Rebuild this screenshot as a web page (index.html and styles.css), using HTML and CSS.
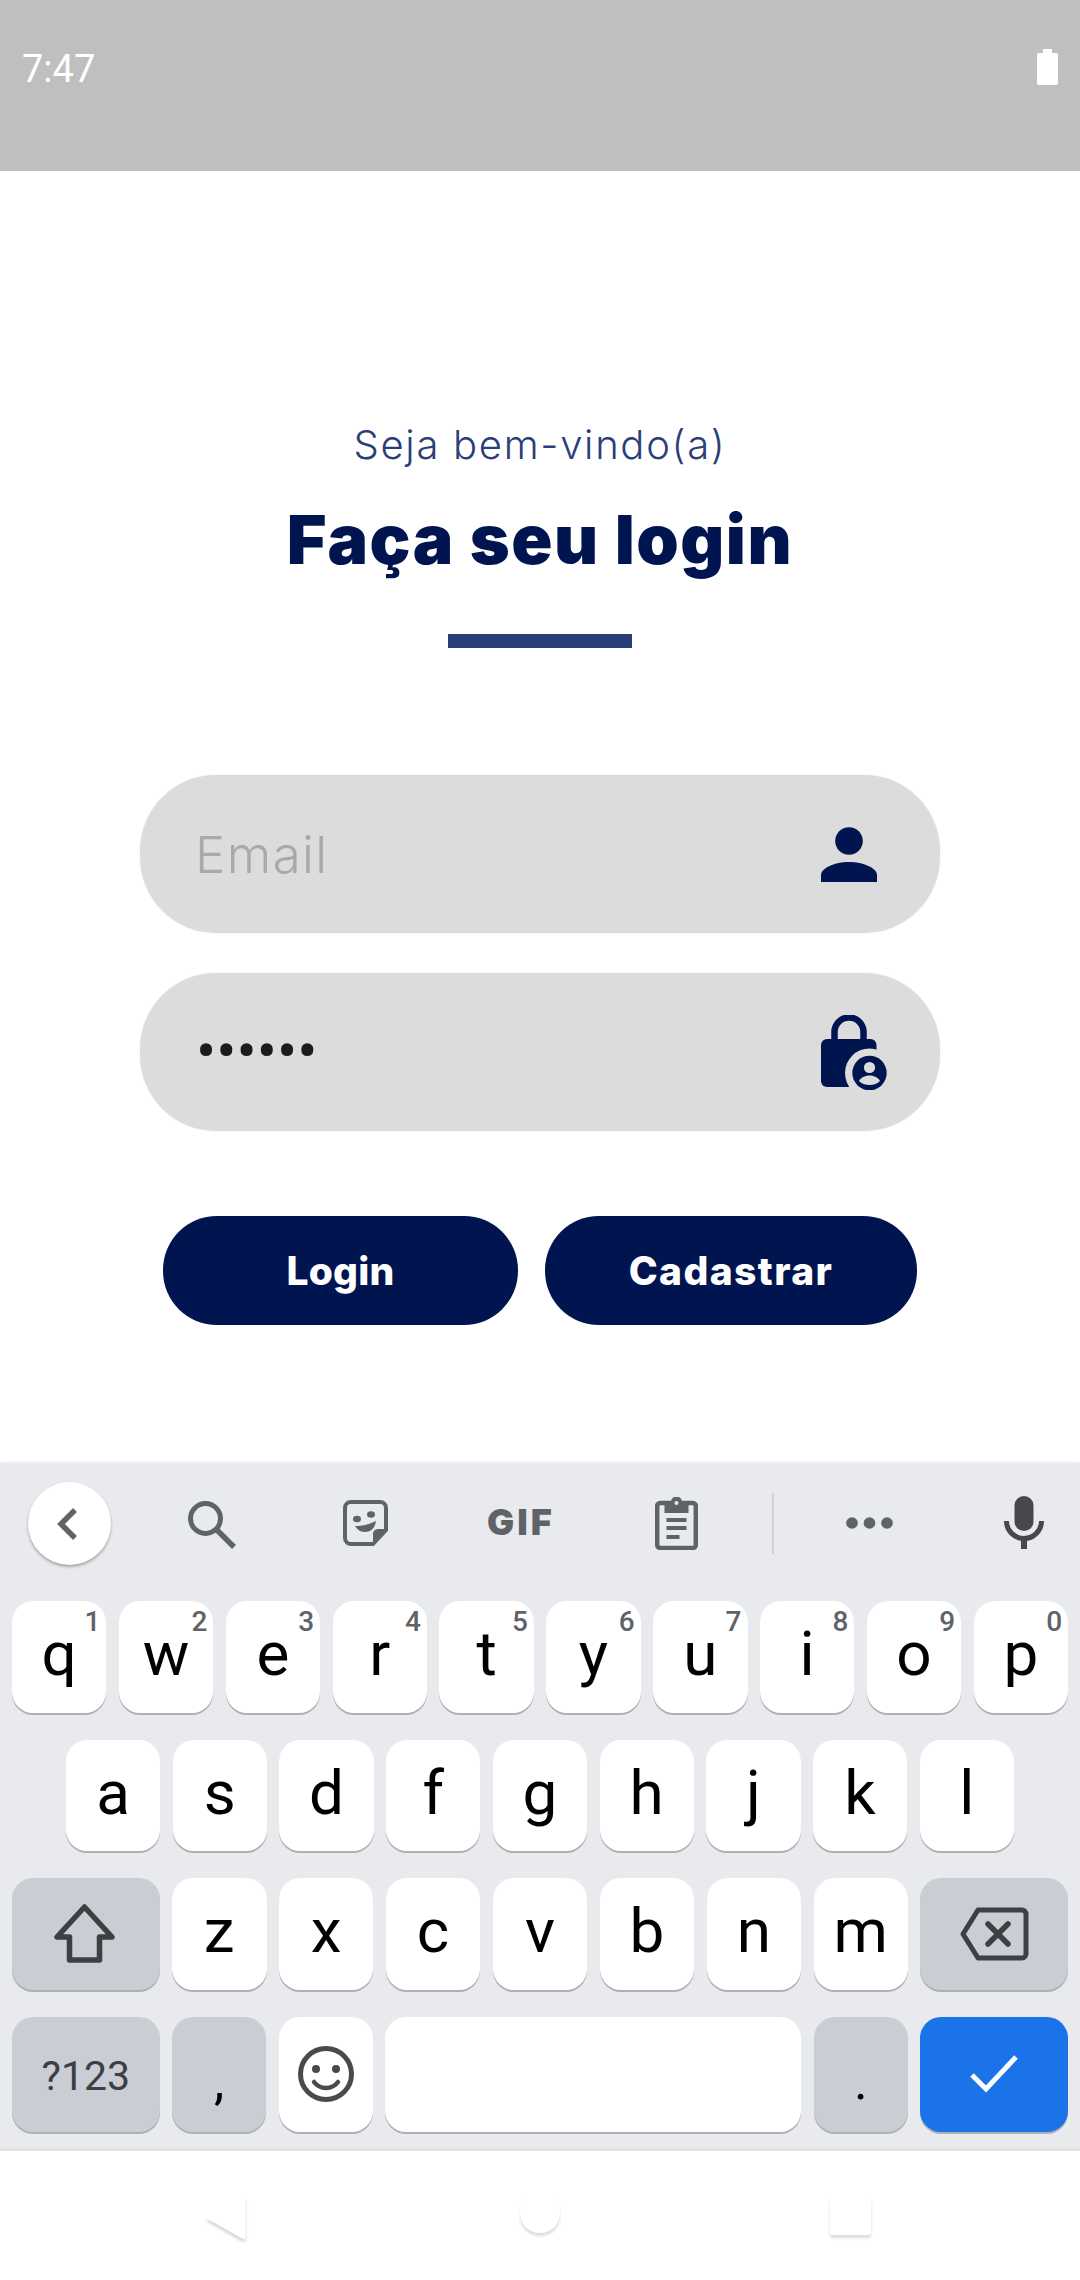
FILE: index.html
```html
<!DOCTYPE html>
<html>
<head>
<meta http-equiv="Content-Type" content="text/html; charset=utf-8"/>
<title>Login</title>
<link rel="stylesheet" href="styles.css">
</head>
<body>

<div class="statusbar">
  <span class="time">7:47</span>
  <svg class="battery" width="21" height="36" viewBox="0 0 21 36"><path d="M6 0h9v4h4a2 2 0 0 1 2 2v28a2 2 0 0 1-2 2H2a2 2 0 0 1-2-2V6a2 2 0 0 1 2-2h4z" fill="#fff"/></svg>
</div>

<div class="main">
  <p class="welcome">Seja bem-vindo(a)</p>
  <h1 class="title">Faça seu login</h1>
  <div class="rule"></div>

  <div class="field">
    <span class="placeholder">Email</span>
    <svg width="56" height="55" viewBox="0 0 56 55"><circle cx="28" cy="14" r="13.8" fill="#00154f"/><path d="M0 55v-7C0 41 14 35 28 35s28 6 28 13v7z" fill="#00154f"/></svg>
  </div>
  <div class="field field-pass">
    <span class="dots">••••••</span>
    <svg width="66" height="75" viewBox="0 0 66 75">
      <path d="M13.5 26V17a14.5 14.5 0 0 1 29 0v9" fill="none" stroke="#00154f" stroke-width="6.5"/>
      <rect x="0" y="24" width="55.5" height="48" rx="6" fill="#00154f"/>
      <circle cx="48.5" cy="58" r="24.5" fill="#dcdcdc"/>
      <circle cx="48.5" cy="58" r="17.2" fill="#00154f"/>
      <circle cx="48.5" cy="52.5" r="5.6" fill="#dcdcdc"/>
      <path d="M38 66c2-4 7-5.500 10.500-5.500S57 62 59 66c-2.500 2.500-6 4-10.500 4S40.500 68.500 38 66z" fill="#dcdcdc"/>
    </svg>
  </div>

  <div class="actions">
    <button class="btn btn-login">Login</button>
    <button class="btn btn-signup">Cadastrar</button>
  </div>
</div>

<div class="keyboard">
  <div class="toolbar">
    <div class="back">
      <svg width="20" height="32" viewBox="0 0 20 32"><path d="M18 2 4 16l14 14" fill="none" stroke="#5f6368" stroke-width="5.500"/></svg>
    </div>
    <svg class="t-search" width="48" height="48" viewBox="0 0 48 48"><circle cx="17.500" cy="17.500" r="15" fill="none" stroke="#5f6368" stroke-width="5"/><path d="M28 28l18 18" stroke="#5f6368" stroke-width="5.500"/></svg>
    <svg class="t-sticker" width="47" height="46" viewBox="0 0 47 46">
      <path d="M8 2h29a6 6 0 0 1 6 6v22L30 44H8a6 6 0 0 1-6-6V8a6 6 0 0 1 6-6z" fill="none" stroke="#5f6368" stroke-width="4"/>
      <path d="M44 29 30 44V35a5 5 0 0 1 5-6z" fill="#5f6368"/>
      <ellipse cx="14" cy="19" rx="4" ry="3.200" fill="#5f6368"/>
      <ellipse cx="28" cy="14.500" rx="4" ry="3.200" fill="#5f6368"/>
      <path d="M12 26c7 0 13-1 21-5-1 7-5 11-11 11-5 0-8-3-10-6z" fill="#5f6368"/>
    </svg>
    <span class="gif">GIF</span>
    <svg class="t-clip" width="43" height="53" viewBox="0 0 43 53">
      <rect x="2.200" y="6" width="38.600" height="45" rx="3" fill="none" stroke="#5f6368" stroke-width="4.500"/>
      <path d="M9.500 5h6.500a5.500 5.500 0 0 1 11 0h6.500v11h-24z" fill="#5f6368"/>
      <circle cx="21.500" cy="6" r="2" fill="#e8eaed"/>
      <path d="M11.500 23h20M11.500 31h20M11.500 40h13" stroke="#5f6368" stroke-width="4"/>
    </svg>
    <div class="divider"></div>
    <svg class="t-more" width="47" height="12" viewBox="0 0 47 12"><circle cx="6" cy="6" r="5.800" fill="#5f6368"/><circle cx="23.500" cy="6" r="5.800" fill="#5f6368"/><circle cx="41" cy="6" r="5.800" fill="#5f6368"/></svg>
    <svg class="t-mic" width="40" height="53" viewBox="0 0 40 53">
      <rect x="10.500" y="0" width="19" height="35" rx="9.500" fill="#46484b"/>
      <path d="M2.500 25a17.500 17.500 0 0 0 35 0" fill="none" stroke="#46484b" stroke-width="5"/>
      <rect x="17" y="41" width="6" height="12" fill="#46484b"/>
    </svg>
  </div>

  <div class="rows">
    <div class="row">
      <div class="key">q<span class="hint">1</span></div>
      <div class="key">w<span class="hint">2</span></div>
      <div class="key">e<span class="hint">3</span></div>
      <div class="key">r<span class="hint">4</span></div>
      <div class="key">t<span class="hint">5</span></div>
      <div class="key">y<span class="hint">6</span></div>
      <div class="key">u<span class="hint">7</span></div>
      <div class="key">i<span class="hint">8</span></div>
      <div class="key">o<span class="hint">9</span></div>
      <div class="key">p<span class="hint">0</span></div>
    </div>
    <div class="row row-home">
      <div class="key">a</div>
      <div class="key">s</div>
      <div class="key">d</div>
      <div class="key">f</div>
      <div class="key">g</div>
      <div class="key">h</div>
      <div class="key">j</div>
      <div class="key">k</div>
      <div class="key">l</div>
    </div>
    <div class="row">
      <div class="key key-wide key-fn">
        <svg class="shift" width="61" height="59" viewBox="0 0 61 59"><path d="M30.500 3 3 33h12.500v23h30V33H58z" fill="none" stroke="#3c4043" stroke-width="5.500" stroke-linejoin="round"/></svg>
      </div>
      <div class="key">z</div>
      <div class="key">x</div>
      <div class="key">c</div>
      <div class="key">v</div>
      <div class="key">b</div>
      <div class="key">n</div>
      <div class="key">m</div>
      <div class="key key-wide key-fn">
        <svg width="69" height="54" viewBox="0 0 69 54"><path d="M18 3h44a4 4 0 0 1 4 4v40a4 4 0 0 1-4 4H18L3 27z" fill="none" stroke="#3c4043" stroke-width="5" stroke-linejoin="round"/><path d="M28 17l20 20M48 17 28 37" stroke="#3c4043" stroke-width="5.500" stroke-linecap="round"/></svg>
      </div>
    </div>
    <div class="row">
      <div class="key key-wide key-fn key-sym">?123</div>
      <div class="key key-fn key-punct">,</div>
      <div class="key">
        <svg width="56" height="56" viewBox="0 0 56 56"><circle cx="28" cy="28" r="25.500" fill="none" stroke="#4a4a4a" stroke-width="5"/><circle cx="18" cy="23" r="4" fill="#4a4a4a"/><circle cx="38" cy="23" r="4" fill="#4a4a4a"/><path d="M16 36c3 4 7.500 6 12 6s9-2 12-6" fill="none" stroke="#4a4a4a" stroke-width="4.500" stroke-linecap="round"/></svg>
      </div>
      <div class="key key-space"></div>
      <div class="key key-fn key-punct">.</div>
      <div class="key key-wide key-go">
        <svg width="48" height="38" viewBox="0 0 48 38"><path d="M2 20l14 14L46 2" fill="none" stroke="#fff" stroke-width="5"/></svg>
      </div>
    </div>
  </div>
</div>

<div class="navbar">
  <svg class="nav-back" width="50" height="52" viewBox="0 0 50 52"><path d="M43 2a1.500 1.500 0 0 1 1.500 1.500V42a2 2 0 0 1-3 1.800L5 23z" fill="#fff"/></svg>
  <div class="nav-home"></div>
  <div class="nav-recent"></div>
</div>

</body>
</html>
```

FILE: styles.css
```css
body {
  margin: 0;
  width: 1080px;
  height: 2280px;
  overflow: hidden;
  display: flex;
  flex-direction: column;
  background-color: white;
  font-family: "Inter", "Noto Sans", sans-serif;
}

/* status bar */

.statusbar {
  height: 171px;
  flex: none;
  box-sizing: border-box;
  padding: 46px 22px 0;
  display: flex;
  justify-content: space-between;
  align-items: flex-start;
  background-color: #bfbfbf;
}

.time {
  font-family: "Roboto", sans-serif;
  font-size: 38px;
  line-height: 46px;
  color: #fff;
}

.battery {
  margin-top: 3px;
}

/* login form */

.main {
  flex: none;
  height: 1292px;
  display: flex;
  flex-direction: column;
  align-items: center;
}

.welcome {
  margin: 249px 0 0;
  font-size: 40px;
  font-weight: 300;
  line-height: 50px;
  letter-spacing: 1.7px;
  color: #2a3f78;
}

.title {
  margin: 26px 0 0;
  font-size: 68px;
  font-weight: 900;
  line-height: 86px;
  letter-spacing: 1.5px;
  color: #00154f;
}

.rule {
  width: 184px;
  height: 14px;
  margin-top: 52px;
  background-color: #2a3f78;
}

.field {
  width: 800px;
  height: 158px;
  box-sizing: border-box;
  margin-top: 40px;
  padding: 0 63px 0 55px;
  display: flex;
  justify-content: space-between;
  align-items: center;
  border-radius: 76px;
  background-color: #dcdcdc;
  box-shadow: 0 0 0 1px #f8f8f8;
}

.rule + .field {
  margin-top: 127px;
}

.field-pass {
  padding-right: 53px;
  padding-left: 56px;
}

.placeholder {
  font-size: 51px;
  font-weight: 300;
  letter-spacing: 1.4px;
  color: #a9a9a9;
}

.dots {
  font-family: "Roboto", sans-serif;
  font-size: 60px;
  line-height: 60px;
  color: #1c1c1c;
}

.actions {
  display: flex;
  gap: 27px;
  margin-top: 85px;
}

.btn {
  height: 109px;
  padding: 0;
  border: none;
  border-radius: 54px;
  background-color: #00154f;
  color: #fff;
  font-family: "Inter", "Noto Sans", sans-serif;
  font-size: 39px;
  font-weight: 800;
  letter-spacing: 1.4px;
}

.btn-login {
  width: 355px;
  letter-spacing: 0.2px;
}

.btn-signup {
  width: 372px;
}

/* keyboard */

.keyboard {
  flex: none;
  height: 685px;
  border-bottom: 3px solid #e0e1e3;
  box-shadow: 0 -2px 2px #f2f2f2;
  background-color: #e8eaed;
}

.toolbar {
  height: 138px;
  box-sizing: border-box;
  padding: 19px 0 0 28px;
  display: flex;
  align-items: flex-start;
}

.back {
  width: 83px;
  height: 83px;
  flex: none;
  display: flex;
  justify-content: center;
  align-items: center;
  border-radius: 50%;
  background-color: #fff;
  box-shadow: 0 2px 3px rgba(0, 0, 0, 0.3);
}

.back svg {
  margin-right: 6px;
}

.t-search {
  margin: 19px 0 0 77px;
}

.t-sticker {
  margin: 18px 0 0 107px;
}

.gif {
  margin: 22px 0 0 97px;
  width: 65px;
  text-align: center;
  white-space: nowrap;
  font-size: 36px;
  font-weight: 900;
  line-height: 36px;
  letter-spacing: 3px;
  color: #5f6368;
}

.t-clip {
  margin: 15px 0 0 103px;
}

.divider {
  width: 2px;
  height: 61px;
  margin: 11px 0 0 74px;
  background-color: #cfd1d5;
}

.t-more {
  margin: 35px 0 0 72px;
}

.t-mic {
  margin: 14px 0 0 111px;
}

.rows {
  display: flex;
  flex-direction: column;
  gap: 27px;
  padding: 0 12px;
}

.row {
  display: flex;
  gap: 12.4px;
  height: 111.6px;
}

.row:last-child {
  height: 115px;
}

.row-home {
  padding: 0 54px;
}

.key {
  flex: 1 1 0;
  min-width: 0;
  position: relative;
  display: flex;
  justify-content: center;
  align-items: center;
  padding-bottom: 6px;
  box-sizing: border-box;
  border-radius: 21px;
  background-color: #fff;
  box-shadow: 0 2px 0 #aeb0b4;
  font-family: "Roboto", sans-serif;
  font-size: 62px;
  color: #000;
}

.key svg {
  margin-top: 6px;
}

.key .shift {
  margin-right: 3px;
}

.hint {
  position: absolute;
  top: 7px;
  right: 6px;
  font-size: 28px;
  font-weight: 500;
  line-height: 28px;
  color: #5f6368;
}

.key-wide {
  flex: 0 0 147.6px;
}

.key-space {
  flex: 0 0 416px;
}

.key-fn {
  background-color: #cacdd4;
}

.key-sym {
  padding: 3px 0 0;
  font-size: 41px;
  color: #3c4043;
}

.key-punct {
  padding: 15px 0 0;
  font-size: 52px;
}

.key-go {
  background-color: #1a73e8;
}

/* nav bar */

.navbar {
  flex: 1;
  position: relative;
}

.nav-back,
.nav-home,
.nav-recent {
  position: absolute;
}

.nav-back {
  left: 201px;
  top: 44px;
  filter: drop-shadow(0 3px 1.5px rgba(0, 0, 0, 0.16));
}

.nav-home {
  left: 520px;
  top: 42px;
  width: 40px;
  height: 40px;
  border-radius: 50%;
  background-color: #fff;
  box-shadow: 0 3px 3px rgba(0, 0, 0, 0.14);
}

.nav-recent {
  left: 830px;
  top: 46px;
  width: 41px;
  height: 38px;
  border-radius: 3px;
  background-color: #fff;
  box-shadow: 0 3px 3px rgba(0, 0, 0, 0.14);
}
```
